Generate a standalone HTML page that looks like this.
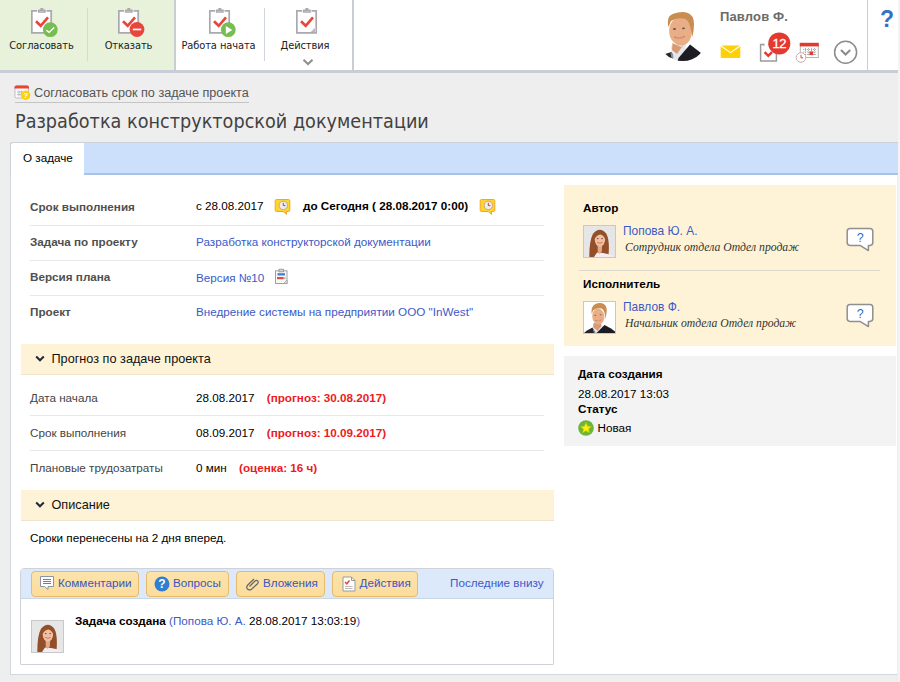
<!DOCTYPE html>
<html lang="ru">
<head>
<meta charset="utf-8">
<title>Разработка конструкторской документации</title>
<style>
*{box-sizing:border-box;margin:0;padding:0}
html,body{width:900px;height:682px;overflow:hidden}
body{background:#eeeeee;font-family:"Liberation Sans",Arial,sans-serif;font-size:11.7px;color:#000;position:relative}
a{color:#3c59c8;text-decoration:none}
.abs{position:absolute}
/* top bar */
#top{position:absolute;left:0;top:0;width:900px;height:73px;background:#fff;border-bottom:3px solid #c9cdd5}
#green{position:absolute;left:0;top:0;width:174px;height:70px;background:#e8f1d9}
.vsep{position:absolute;width:1px;background:#d9d9d9}
.tbtn{position:absolute;top:0;height:70px;text-align:center;font-size:11px;color:#222;font-family:"DejaVu Sans Condensed","Liberation Sans",sans-serif}
.tbtn span{position:absolute;left:0;right:0;top:39px;white-space:nowrap;letter-spacing:-0.1px}
.tbtn svg{position:absolute;top:7px}
/* header */
#crumb{position:absolute;left:15px;top:84px;height:19px;border-bottom:1px solid #c4c4c4;color:#555;font-size:12.65px;line-height:18px;padding-left:19px;white-space:nowrap}
#title{position:absolute;left:15px;top:108px;font-family:"DejaVu Sans Condensed","Liberation Sans",sans-serif;font-size:19.6px;color:#424242;white-space:nowrap;letter-spacing:0.02px;line-height:28px}
/* panel */
#panel{position:absolute;left:10px;top:143px;width:888px;height:532px;background:#fff;border:1px solid #d3d7de;border-top:none;border-right-color:#eceef1}
#tabs{position:absolute;left:10px;top:142px;width:888px;height:33px;background:#cce0fb;border-bottom:2px solid #a9c3e6;border-top:1px solid #cdd2da;border-left:1px solid #cdd2da;border-radius:3px 0 0 0}
#tab{position:absolute;left:10px;top:142px;width:74px;height:34px;background:#fff;font-size:11.7px;line-height:29px;padding-left:12px;color:#000;border-left:1px solid #cdd2da;border-top:1px solid #cdd2da;border-radius:3px 0 0 0}
.lbl{position:absolute;left:30px;font-weight:bold;color:#4f4f4f;white-space:nowrap;line-height:14px}
.lbl2{position:absolute;left:30px;color:#444;white-space:nowrap;line-height:14px}
.val{position:absolute;left:196px;white-space:nowrap;line-height:14px}
.hsep{position:absolute;left:30px;width:514px;height:1px;background:#e8e8e8}
.sec{position:absolute;left:20.5px;width:533px;height:31px;background:#fef3d6;border-bottom:1px solid #ece4cc;line-height:30px;padding-left:31px;font-size:12.7px;color:#111}
.red{color:#ee1a22;font-weight:bold}
b{font-weight:bold}
#uname{font-family:"Liberation Sans",sans-serif;font-weight:bold;font-size:13px;color:#6b6b6b;white-space:nowrap;letter-spacing:0.15px;line-height:16px}
#help{font-family:"Liberation Sans",sans-serif;font-weight:bold;font-size:23px;color:#3a70c0;line-height:26px}
#cbox{position:absolute;left:20px;top:568px;width:534px;height:97px;background:#fff;border:1px solid #cfd3d9;border-radius:4px 4px 1px 1px}
#chead{position:absolute;left:21px;top:569px;width:532px;height:30px;background:#dce9fb;border-bottom:1px solid #c9d6e6;border-radius:3px 3px 0 0}
.cbtn{position:absolute;top:571px;height:26px;background:linear-gradient(#fce3ad,#fbdc9b);border:1px solid #e9b96c;border-radius:4px;color:#2f4fb5}
.cbtn span{position:absolute;top:4px;margin-left:-1px;line-height:14px;white-space:nowrap;color:#3a55c0}
.rb{line-height:14px;white-space:nowrap}
.ital{font-family:"Liberation Serif",serif;font-style:italic;font-size:11.7px;line-height:14px;color:#333;white-space:nowrap}
</style>
</head>
<body>
<div id="top">
  <div id="green"></div>
  <div class="vsep" style="left:174px;top:0;height:70px;width:2px;background:#c9cdd6"></div>
  <div class="vsep" style="left:352px;top:0;height:70px;width:2px;background:#c9cdd6"></div>
  <div class="vsep" style="left:87px;top:8px;height:53px;background:#d3dcc6"></div>
  <div class="vsep" style="left:264px;top:8px;height:53px;background:#d0d5dd"></div>
  <div class="vsep" style="left:867px;top:0;height:70px;background:#c9cdd6"></div>

  <div class="tbtn" style="left:0;width:83px">
    <svg style="left:29px" width="30" height="32" viewBox="0 0 30 32">
      <use href="#clip"/>
      <path d="M7 14.3 L11.7 18.8 L19 10.3" fill="none" stroke="#e8463a" stroke-width="2.6"/>
      <circle cx="21.3" cy="22.7" r="7.4" fill="#77bd51"/>
      <path d="M17.4 23.2 L20.1 25.4 L25.2 20.4" fill="none" stroke="#fff" stroke-width="1.4"/>
    </svg>
    <span>Согласовать</span>
  </div>
  <div class="tbtn" style="left:87px;width:83px">
    <svg style="left:29px" width="30" height="32" viewBox="0 0 30 32">
      <use href="#clip"/>
      <path d="M7 14.3 L11.7 18.8 L19 10.3" fill="none" stroke="#e8463a" stroke-width="2.6"/>
      <circle cx="21" cy="22.5" r="7.4" fill="#e8463a"/>
      <rect x="16.8" y="21.6" width="8.4" height="1.7" fill="#fff"/>
    </svg>
    <span>Отказать</span>
  </div>
  <div class="tbtn" style="left:177px;width:83px">
    <svg style="left:29.7px" width="30" height="32" viewBox="0 0 30 32">
      <use href="#clip"/>
      <path d="M7 14.3 L11.7 18.8 L19 10.3" fill="none" stroke="#e8463a" stroke-width="2.6"/>
      <circle cx="21.3" cy="22.7" r="7.4" fill="#77bd51"/>
      <path d="M18.8 19 L25.3 23 L18.8 27 Z" fill="#fff"/>
    </svg>
    <span>Работа начата</span>
  </div>
  <div class="tbtn" style="left:264px;width:83px">
    <svg style="left:30px" width="30" height="32" viewBox="0 0 30 32">
      <use href="#clip"/>
      <path d="M7 14.3 L11.7 18.8 L19 10.3" fill="none" stroke="#e8463a" stroke-width="2.6"/>
      <rect x="16.4" y="20" width="5" height="5" fill="#fbfbfb"/>
      <path d="M21.4 20.4 L21.4 25 L16.8 25 Z" fill="#b9b9bd"/>
    </svg>
    <span style="left:-1px">Действия</span>
    <svg style="left:38px;top:58px" width="12" height="8" viewBox="0 0 12 8"><path d="M1.5 1.7 L6 6 L10.5 1.7" fill="none" stroke="#8e8e8e" stroke-width="2"/></svg>
  </div>

  <!-- user -->
  <svg class="abs" style="left:655px;top:0px" width="60" height="70" viewBox="0 0 60 70">
    <defs><clipPath id="uc"><circle cx="27.7" cy="36.5" r="24.6"/></clipPath>
    <filter id="bl" x="-10%" y="-10%" width="120%" height="120%"><feGaussianBlur stdDeviation="0.5"/></filter></defs>
    <g clip-path="url(#uc)" filter="url(#bl)">
      <path d="M16 46 L31 42 L30 60 L17 60 Z" fill="#e4e7ee"/>
      <path d="M17.5 43 L26 47 L29 44 L22 54 L17 50 Z" fill="#d99a72"/>
      <path d="M35 44.5 L46 53 L40 60 L22 63 L23.5 58 Z" fill="#1d1e23"/>
      <path d="M10 54 L16.5 52 L18 58.5 L12 57 Z" fill="#26272c"/>
      <path d="M15.5 53 L18 53.5 L18.5 58 L16.5 58 Z" fill="#8d949c"/>
      <ellipse cx="25.5" cy="31.5" rx="11.3" ry="14" fill="#eaae86" transform="rotate(-6 25.5 31.5)"/>
      <path d="M13.5 27 Q11 17 18 13 Q25 9 32 12.5 Q39 15 39 24 Q39 30 37.5 37 L36 30 Q35 22 30 19 Q22 17 16 21 Z" fill="#c88d4f"/>
      <path d="M19 37 Q24 40.5 30 36.5 Q24.5 38.5 19 37Z" fill="#fff" stroke="#c4745e" stroke-width="0.7"/>
      <ellipse cx="19.5" cy="29" rx="1.6" ry="0.9" fill="#6a5a55"/>
      <ellipse cx="28.5" cy="28.3" rx="1.6" ry="0.9" fill="#6a5a55"/>
    </g>
  </svg>
  <div class="abs" id="uname" style="left:720px;top:9px">Павлов Ф.</div>
  <svg class="abs" style="left:720px;top:45px" width="22" height="14" viewBox="0 0 22 14">
    <rect x="0.7" y="0.4" width="19.6" height="12.6" rx="0.8" fill="#fdd008"/>
    <path d="M0.7 0.8 L10.5 7.6 L20.3 0.8" fill="none" stroke="#fff" stroke-width="1.1"/>
  </svg>
  <svg class="abs" style="left:759px;top:32px" width="34" height="32" viewBox="0 0 34 32">
    <path d="M1.6 12.6 H17.4 V29 H1.6 Z" fill="#fff" stroke="#9b9b9b" stroke-width="1.5"/>
    <rect x="4.2" y="11" width="5" height="3" fill="#fff"/>
    <path d="M4.8 11.5 V14" stroke="#9b9b9b" stroke-width="1.2"/>
    <path d="M5.6 20.2 L9.3 23.9 L13 20.2" fill="none" stroke="#e5392f" stroke-width="2.4"/>
    <circle cx="20.3" cy="11.4" r="11" fill="#e5392f"/>
    <text x="20.3" y="16" text-anchor="middle" font-family="Liberation Sans, sans-serif" font-size="13" fill="#fff" stroke="#fff" stroke-width="0.3" letter-spacing="-0.5">12</text>
  </svg>
  <svg class="abs" style="left:794px;top:41px" width="28" height="26" viewBox="0 0 28 26">
    <rect x="6.3" y="2.5" width="18" height="14" fill="#fff" stroke="#b5b5b5" stroke-width="1"/>
    <rect x="5.8" y="1.8" width="19" height="3.6" fill="#e5392f"/>
    <path d="M9 8.5 H22.5 M9 11 H22.5 M9 13.5 H22.5 M11.5 7 V15 M14.5 7 V15 M17.5 7 V15 M20.5 7 V15" stroke="#9a9a9a" stroke-width="0.8" fill="none" stroke-dasharray="1.2 0.8"/>
    <rect x="15.5" y="10.5" width="3.6" height="3.6" fill="#e5392f"/>
    <circle cx="7" cy="16.5" r="4.8" fill="#fff" stroke="#c9a0a0" stroke-width="0.9"/>
    <path d="M7 13.8 V16.8 H9.2" fill="none" stroke="#d9483f" stroke-width="1"/>
  </svg>
  <svg class="abs" style="left:833px;top:39px" width="26" height="27" viewBox="0 0 26 27">
    <circle cx="12.6" cy="13.2" r="11" fill="#fff" stroke="#8c8c8c" stroke-width="1.5"/>
    <path d="M8 11 L12.6 15.6 L17.2 11" fill="none" stroke="#8c8c8c" stroke-width="2.1"/>
  </svg>
  <div class="abs" id="help" style="left:880px;top:6px">?</div>
</div>
<svg width="0" height="0" style="position:absolute">
  <defs>
    <g id="clip">
      <path d="M2.85 3.85 H22.2 V25.85 H2.85 Z" fill="#fff" stroke="#a9a9af" stroke-width="1.7"/>
      <rect x="8.2" y="2.5" width="9.3" height="3.2" fill="#fff"/>
      <path d="M9.7 3.2 H16 V5 H9.7 Z" fill="#fff" stroke="#a9a9af" stroke-width="1.5"/>
      <rect x="11.2" y="1" width="3.3" height="2" rx="0.8" fill="#a9a9af"/>
    </g>
  </defs>
</svg>

<div class="abs" style="left:898px;top:0;width:2px;height:682px;background:#f4f4f4"></div>
<!-- header -->
<div id="crumb">
  <svg class="abs" style="left:-1px;top:0px" width="17" height="16" viewBox="0 0 17 16">
    <rect x="1" y="2" width="13.5" height="12" rx="1" fill="#fff" stroke="#bdbdbd"/>
    <path d="M0.5 3.5 Q0.5 1.5 2.5 1.5 H13 Q15 1.5 15 3.5 V4.6 H0.5 Z" fill="#ea4335"/>
    <path d="M3 8 H9 M3 10.5 H8 M5 6.5 V12.5 M7.3 6.5 V12.5" stroke="#b5b5b5" stroke-width="0.9" fill="none"/>
    <circle cx="11.6" cy="11.2" r="4.7" fill="#fdd00c"/>
    <text x="11.6" y="14" text-anchor="middle" font-family="Liberation Sans, sans-serif" font-weight="bold" font-size="8" fill="#fff">?</text>
  </svg>
  Согласовать срок по задаче проекта
</div>
<div id="title">Разработка конструкторской документации</div>

<div id="panel"></div>
<div id="tabs"></div>
<div id="tab">О задаче</div>

<!-- left column -->
<div class="lbl" style="top:200px">Срок выполнения</div>
<div class="val" style="top:199px">с 28.08.2017</div>
<svg class="abs clk" style="left:274px;top:198px" width="17" height="17" viewBox="0 0 17 17"><use href="#clk"/></svg>
<div class="val" style="left:303px;top:199px"><b>до Сегодня ( 28.08.2017 0:00)</b></div>
<svg class="abs clk" style="left:479px;top:198px" width="17" height="17" viewBox="0 0 17 17"><use href="#clk"/></svg>
<div class="hsep" style="top:225px"></div>
<div class="lbl" style="top:235px">Задача по проекту</div>
<div class="val" style="top:235px"><a>Разработка конструкторской документации</a></div>
<div class="hsep" style="top:260px"></div>
<div class="lbl" style="top:270px">Версия плана</div>
<div class="val" style="top:271px"><a>Версия №10</a></div>
<svg class="abs" style="left:274px;top:268px" width="15" height="17" viewBox="0 0 15 17">
  <rect x="1.5" y="2.8" width="11.5" height="12.7" fill="#f7f7f4" stroke="#a0a0a0"/>
  <rect x="5" y="1.2" width="4.5" height="2.6" fill="#d8d8d8" stroke="#909090" stroke-width="0.8"/>
  <rect x="3.5" y="5.2" width="7.5" height="2.3" fill="#3f7fd6"/>
  <rect x="3" y="9" width="6.6" height="2.2" fill="#e5483d"/>
  <rect x="10" y="9.4" width="1.6" height="1.6" fill="#aaa"/>
  <path d="M9.5 15.5 L13 15.5 L13 12 Z" fill="#e4e4e4" stroke="#999" stroke-width="0.7"/>
</svg>
<div class="hsep" style="top:295px"></div>
<div class="lbl" style="top:305px">Проект</div>
<div class="val" style="top:305px"><a>Внедрение системы на предприятии ООО "InWest"</a></div>

<div class="sec" style="top:344px"><svg class="abs" style="left:14px;top:11px" width="10" height="8" viewBox="0 0 10 8"><path d="M1.2 1.5 L5 5.3 L8.8 1.5" fill="none" stroke="#1f2a3a" stroke-width="2"/></svg>Прогноз по задаче проекта</div>
<div class="lbl2" style="top:391px">Дата начала</div>
<div class="val" style="top:391px">28.08.2017 <span class="red" style="margin-left:9px">(прогноз: 30.08.2017)</span></div>
<div class="hsep" style="top:415px"></div>
<div class="lbl2" style="top:426px">Срок выполнения</div>
<div class="val" style="top:426px">08.09.2017 <span class="red" style="margin-left:9px">(прогноз: 10.09.2017)</span></div>
<div class="hsep" style="top:450px"></div>
<div class="lbl2" style="top:461px">Плановые трудозатраты</div>
<div class="val" style="top:461px">0 мин <span class="red" style="margin-left:9px">(оценка: 16 ч)</span></div>

<div class="sec" style="top:490px"><svg class="abs" style="left:14px;top:11px" width="10" height="8" viewBox="0 0 10 8"><path d="M1.2 1.5 L5 5.3 L8.8 1.5" fill="none" stroke="#1f2a3a" stroke-width="2"/></svg>Описание</div>
<div class="val" style="left:30px;top:531px">Сроки перенесены на 2 дня вперед.</div>

<!-- comments -->
<div id="cbox"></div>
<div id="chead"></div>
<div class="cbtn" style="left:31px;width:108px"><svg class="abs" style="left:7px;top:3px" width="16" height="16" viewBox="0 0 16 16">
  <path d="M1.5 1.5 H14.5 V11.5 H9 L9 14.5 L5.5 11.5 H1.5 Z" fill="#fff" stroke="#8a93a8" stroke-width="1"/>
  <path d="M4 4.5 H12 M4 6.5 H12 M4 8.5 H12" stroke="#6d7fa8" stroke-width="1"/></svg><span style="left:27px">Комментарии</span></div>
<div class="cbtn" style="left:146px;width:83px"><svg class="abs" style="left:6.5px;top:3.5px" width="16" height="16" viewBox="0 0 16 16">
  <circle cx="8" cy="8" r="7.5" fill="#2f7fd1"/>
  <text x="8" y="12.3" text-anchor="middle" font-family="Liberation Sans, sans-serif" font-weight="bold" font-size="12" fill="#fff">?</text></svg><span style="left:27px">Вопросы</span></div>
<div class="cbtn" style="left:236px;width:89px"><svg class="abs" style="left:8px;top:5px" width="16" height="14" viewBox="0 0 16 14">
  <path d="M4.5 9.5 L10 4 Q11.5 2.8 12.8 4 Q13.8 5.3 12.5 6.7 L6.5 12.2 Q4.2 13.8 2.4 12 Q0.8 10 2.8 8 L9 2" fill="none" stroke="#666" stroke-width="1.2"/></svg><span style="left:27px">Вложения</span></div>
<div class="cbtn" style="left:332px;width:86px"><svg class="abs" style="left:9px;top:4px" width="14" height="16" viewBox="0 0 14 16">
  <path d="M1 1 H9.5 L13 4.5 V15 H1 Z" fill="#fff" stroke="#9a9a9a"/>
  <path d="M9.5 1 V4.5 H13" fill="none" stroke="#9a9a9a"/>
  <path d="M3 6 L4.8 7.8 L7.5 4.6" fill="none" stroke="#e0473c" stroke-width="1.5"/>
  <path d="M3 10.5 H10.5 M3 12.5 H10.5" stroke="#bbb" stroke-width="1"/></svg><span style="left:27.5px">Действия</span></div>
<div class="abs" style="left:450px;top:576px;line-height:14px;white-space:nowrap"><a>Последние внизу</a></div>
<svg class="abs" style="left:31px;top:620px" width="33" height="33" viewBox="0 0 33 33"><use href="#fem"/></svg>
<div class="abs" style="left:75px;top:614px;line-height:14px;white-space:nowrap"><b>Задача создана</b> <a>(Попова Ю. А.</a> 28.08.2017 13:03:19<a>)</a></div>

<!-- right column -->
<div class="abs" style="left:564px;top:185px;width:331.5px;height:160.5px;background:#fef3d6"></div>
<div class="abs rb" style="left:583px;top:201px"><b>Автор</b></div>
<svg class="abs" style="left:583px;top:224.7px" width="33" height="33" viewBox="0 0 33 33"><use href="#fem"/></svg>
<div class="abs rb" style="left:623px;top:224px;font-size:11.95px"><a>Попова Ю. А.</a></div>
<div class="abs ital" style="left:625px;top:241px">Сотрудник отдела Отдел продаж</div>
<svg class="abs" style="left:846px;top:227px" width="30" height="27" viewBox="0 0 30 27"><use href="#bub"/></svg>
<div class="abs" style="left:579px;top:270px;width:301px;height:1px;background:#dcd8cc"></div>
<div class="abs rb" style="left:583px;top:277px"><b>Исполнитель</b></div>
<svg class="abs" style="left:583px;top:300.6px" width="33" height="33" viewBox="0 0 33 33"><use href="#mal"/></svg>
<div class="abs rb" style="left:623px;top:300px;font-size:11.95px"><a>Павлов Ф.</a></div>
<div class="abs ital" style="left:625px;top:317px">Начальник отдела Отдел продаж</div>
<svg class="abs" style="left:846px;top:303px" width="30" height="27" viewBox="0 0 30 27"><use href="#bub"/></svg>

<div class="abs" style="left:564px;top:356px;width:331.5px;height:89.5px;background:#f3f3f3"></div>
<div class="abs rb" style="left:578px;top:367px"><b>Дата создания</b></div>
<div class="abs rb" style="left:578px;top:386.7px">28.08.2017 13:03</div>
<div class="abs rb" style="left:578px;top:402px"><b>Статус</b></div>
<svg class="abs" style="left:578.3px;top:419.8px" width="16" height="16" viewBox="0 0 16 16">
  <circle cx="8" cy="8" r="7.8" fill="#6cb53a"/>
  <path d="M8 2.6 L9.6 6.2 L13.4 6.5 L10.5 9 L11.4 12.8 L8 10.8 L4.6 12.8 L5.5 9 L2.6 6.5 L6.4 6.2 Z" fill="#fff200" stroke="#b5c21a" stroke-width="0.6"/>
</svg>
<div class="abs rb" style="left:597.5px;top:421px">Новая</div>

<svg width="0" height="0" style="position:absolute">
  <defs>
    <g id="clk">
      <path d="M2.5 1.5 H14.5 Q15.8 1.5 15.8 2.8 V12.2 Q15.8 13.5 14.5 13.5 H12.2 L12.6 16.3 L9.2 13.5 H2.5 Q1.2 13.5 1.2 12.2 V2.8 Q1.2 1.5 2.5 1.5 Z" fill="#ffd42c" stroke="#f5a51f" stroke-width="1"/>
      <circle cx="9.3" cy="7.4" r="4.2" fill="#ececf3" stroke="#b59f79" stroke-width="0.8"/>
      <path d="M9.3 4.8 V7.6 H11.4" fill="none" stroke="#e0362c" stroke-width="1"/>
    </g>
    <g id="bub">
      <path d="M4 1.6 H24 Q26.8 1.6 26.8 4.4 V15.6 Q26.8 18.4 24 18.4 H22.4 L22.4 23.6 L14 18.4 H4 Q1.2 18.4 1.2 15.6 V4.4 Q1.2 1.6 4 1.6 Z" fill="#fff" stroke="#8f8f8f" stroke-width="1.5" stroke-linejoin="round"/>
      <text x="14.2" y="14.6" text-anchor="middle" font-family="Liberation Sans, sans-serif" font-size="12.5" fill="#2a6fbf">?</text>
    </g>
    <g id="fem">
      <rect x="0.5" y="0.5" width="32" height="32" fill="#e6e6e7" stroke="#c6c8cc"/>
      <g filter="url(#bl2)">
      <path d="M6.3 32 Q6.2 16 10 8.8 Q16.8 0.8 23.4 8.8 Q27 16 25.4 32 Z" fill="#93502c"/>
      <path d="M11 32 L14 27.5 L20 28 L29.5 30 L30 32 Z" fill="#f4ecf0"/>
      <path d="M14.6 20 H19.2 L18.8 26.5 L16.5 29 L14.8 26.5 Z" fill="#e3aa8a"/>
      <ellipse cx="16.9" cy="14.6" rx="5.2" ry="7" fill="#f1c0a0"/>
      <path d="M11.3 14.5 Q11 6.6 16.9 6.4 Q22.8 6.6 22.5 14.5 Q20.5 9.6 17.3 9.4 Q13.5 9.6 11.3 14.5Z" fill="#93502c"/>
      <path d="M14.2 17.4 Q16.9 20.2 19.6 17.4 Q16.9 18.7 14.2 17.4Z" fill="#fff" stroke="#c46a5a" stroke-width="0.6"/>
      <ellipse cx="14.7" cy="13.6" rx="0.9" ry="0.6" fill="#5a4a50"/>
      <ellipse cx="19.1" cy="13.6" rx="0.9" ry="0.6" fill="#5a4a50"/>
      </g>
    </g>
    <g id="mal">
      <rect x="0.5" y="0.5" width="32" height="32" fill="#fff" stroke="#c4c8cf"/>
      <g filter="url(#bl2)">
      <path d="M9 27 L21 24.5 L20 32 L10 32 Z" fill="#e6e9ef"/>
      <path d="M10.5 22 L18 22 L18.5 25 L14.5 30 L10 26 Z" fill="#d99a72"/>
      <path d="M1 32 L4 29.5 L9.5 26.5 L12.5 32 Z" fill="#25262b"/>
      <path d="M13.5 32 L21.5 24 L28 27.5 L32 30.5 L32 32 Z" fill="#1d1e23"/>
      <path d="M9.5 27 L11 32 L12.5 32 Z" fill="#8d949c"/>
      <ellipse cx="15.3" cy="15.5" rx="6.1" ry="8" fill="#eaae86" transform="rotate(-5 15.3 15.5)"/>
      <path d="M8.8 13 Q7.5 5.5 12.5 3 Q17.5 1 21.5 3.5 Q24.5 6 23.5 12 L22.3 18 L21.8 13 Q21 8.5 18.5 7.5 Q13.5 6.5 10 9.5 Z" fill="#c88d4f"/>
      <path d="M12 19.3 Q15 21.6 18.4 19 Q15.2 20.3 12 19.3Z" fill="#fff" stroke="#c4745e" stroke-width="0.5"/>
      <ellipse cx="12.3" cy="14.2" rx="0.9" ry="0.55" fill="#6a5a55"/>
      <ellipse cx="17.6" cy="13.8" rx="0.9" ry="0.55" fill="#6a5a55"/>
      </g>
    </g>
    <filter id="bl2" x="-10%" y="-10%" width="120%" height="120%"><feGaussianBlur stdDeviation="0.35"/></filter>
  </defs>
</svg>
</body>
</html>
